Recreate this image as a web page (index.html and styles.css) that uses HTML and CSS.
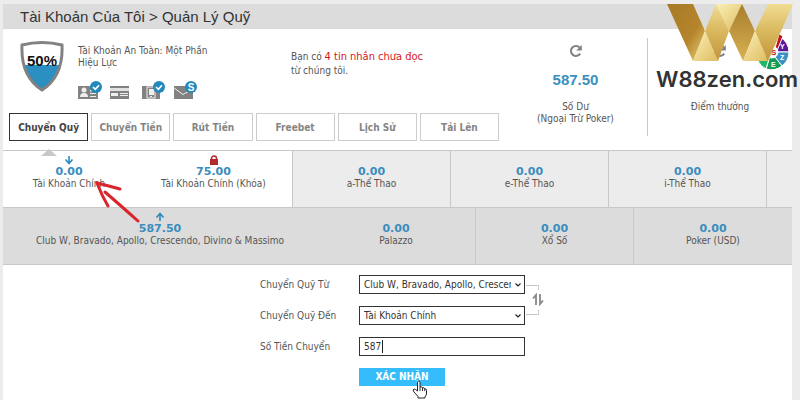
FILE: index.html
```html
<!DOCTYPE html>
<html lang="vi">
<head>
<meta charset="utf-8">
<meta name="viewport" content="width=device-width, initial-scale=1">
<title>Quản Lý Quỹ</title>
<link rel="stylesheet" href="styles.css">
</head>
<body>
<svg class="defs" aria-hidden="true">
  <symbol id="reload" viewBox="0 0 14 14">
    <path d="M11.2 9.6A5 5 0 1 1 10.7 3.6" fill="none" stroke="#828282" stroke-width="2"/>
    <path d="M12.8 1v5.6H7.2z" fill="#828282"/>
  </symbol>
  <symbol id="tick" viewBox="0 0 12 12">
    <circle cx="6" cy="6" r="6" fill="#2388bb"/>
    <path d="M3 6l2.300 2.300L9 4.200" fill="none" stroke="#fff" stroke-width="1.700"/>
  </symbol>
</svg>
<main class="page">
  <h1 class="title">Tài Khoản Của Tôi &gt; Quản Lý Quỹ</h1>

  <section class="summary">
    <div class="account">
      <svg class="shield" viewBox="0 0 44 51" role="img" aria-label="50%">
        <path d="M2 4Q22-1 42 4C43 25 36 40 22 49C8 40 1 25 2 4z" fill="#fff"/>
        <path d="M3 24H41C38 35 32 43 22 49C12 43 6 35 3 24z" fill="#2b8fc2"/>
        <path d="M2 4Q22-1 42 4C43 25 36 40 22 49C8 40 1 25 2 4z" fill="none" stroke="#828282" stroke-width="3"/>
        <text class="shield-text" x="22" y="25" text-anchor="middle">50%</text>
      </svg>
      <div class="security">
        <p class="security-text">Tài Khoản An Toàn: Một Phần<br>Hiệu Lực</p>
        <div class="badges">
          <svg class="badge" viewBox="0 0 26 18">
            <path d="M0 5h20v13H0z" fill="#828282"/>
            <circle cx="6" cy="9" r="2.500" fill="#eee"/>
            <path d="M2 16q0-4 4-4t4 4zM12 9h5v1.500h-5zM12 12h6v1h-6zM12 15h6v1h-6z" fill="#eee"/>
            <use href="#tick" x="12" y="0" width="12" height="12"/>
          </svg>
          <svg class="badge" viewBox="0 0 26 18">
            <path d="M0 5h19v13H0z" fill="#828282"/>
            <path d="M0 7h19v3H0z" fill="#e2e2e2"/>
            <path d="M1 12h7v3H1zM10 12h8v1h-8zM10 14h8v1h-8z" fill="#eee"/>
          </svg>
          <svg class="badge" viewBox="0 0 26 18">
            <path d="M0 5h18v13H0z" fill="#828282"/>
            <rect x="5" y="6" width="8" height="11" fill="#828282" stroke="#eee"/>
            <path d="M7 8h5v6H7z" fill="#eee"/><path d="M8 15h2v1H8z" fill="#eee"/>
            <use href="#tick" x="11" y="0" width="12" height="12"/>
          </svg>
          <svg class="badge" viewBox="0 0 26 18">
            <path d="M0 5h19v13H0z" fill="#828282"/>
            <path d="M0 7l9 6.500L19 8" fill="none" stroke="#eee"/>
            <circle cx="17" cy="6" r="6" fill="#2388bb"/>
            <text class="badge-text" x="17" y="10" text-anchor="middle">S</text>
          </svg>
        </div>
      </div>
    </div>
    <p class="message">Bạn có <a class="unread" href="#">4 tin nhắn chưa đọc</a><br>từ chúng tôi.</p>
    <div class="stat stat-balance">
      <button class="reload" type="button" aria-label="Số Dư"><svg><use href="#reload"/></svg></button>
      <strong class="stat-value">587.50</strong>
      <span>Số Dư<br>(Ngoại Trừ Poker)</span>
    </div>
    <div class="stat">
      <button class="reload" type="button" aria-label="Điểm thưởng"><svg><use href="#reload"/></svg></button>
      <strong class="stat-value"></strong>
      <span>Điểm thưởng</span>
    </div>
    <nav class="tabs">
      <a class="tab tab-active" href="#">Chuyển Quỹ</a>
      <a class="tab" href="#">Chuyển Tiền</a>
      <a class="tab" href="#">Rút Tiền</a>
      <a class="tab" href="#">Freebet</a>
      <a class="tab" href="#">Lịch Sử</a>
      <a class="tab" href="#">Tải Lên</a>
    </nav>
  </section>

  <section class="wallets">
    <div class="wallet-row wallet-main">
      <div class="wallet wallet-on">
        <svg class="mark" viewBox="0 0 10 10"><path d="M5 1v7M1.500 4.500L5 8.500l3.500-4" fill="none" stroke="#2e8abb" stroke-width="1.600"/></svg>
        <strong class="amount">0.00</strong><span>Tài Khoản Chính</span>
      </div>
      <div class="wallet wallet-on">
        <svg class="mark" viewBox="0 0 10 10"><path d="M2.500 5V3.500a2.500 2.500 0 0 1 5 0V5" fill="none" stroke="#b12a2e" stroke-width="1.500"/><path d="M1 4h8v6H1z" fill="#b12a2e"/></svg>
        <strong class="amount">75.00</strong><span>Tài Khoản Chính (Khóa)</span>
      </div>
      <div class="wallet line"><strong class="amount">0.00</strong><span>a-Thể Thao</span></div>
      <div class="wallet line"><strong class="amount">0.00</strong><span>e-Thể Thao</span></div>
      <div class="wallet line"><strong class="amount">0.00</strong><span>i-Thể Thao</span></div>
      <div class="line"></div>
      <i class="pointer"></i>
    </div>
    <div class="wallet-row wallet-more">
      <div class="wallet">
        <svg class="mark" viewBox="0 0 10 10"><path d="M5 9V2M1.500 5.500L5 1.500l3.500 4" fill="none" stroke="#2e8abb" stroke-width="1.600"/></svg>
        <strong class="amount">587.50</strong><span>Club W, Bravado, Apollo, Crescendo, Divino &amp; Massimo</span>
      </div>
      <div class="wallet"><strong class="amount">0.00</strong><span>Palazzo</span></div>
      <div class="wallet line"><strong class="amount">0.00</strong><span>Xổ Số</span></div>
      <div class="wallet line"><strong class="amount">0.00</strong><span>Poker (USD)</span></div>
    </div>
    <svg class="arrow" viewBox="0 0 50 46"><path d="M45 40Q27 24 12 11M27 8Q16 5 4 2Q9 15 15 25" fill="none" stroke="#d9252b" stroke-width="3" stroke-linecap="round" stroke-linejoin="round"/></svg>
  </section>

  <form class="transfer">
    <label for="from">Chuyển Quỹ Từ</label>
    <div class="field">
      <select class="control" id="from"><option>Club W, Bravado, Apollo, Crescendo, Divino &amp; Massimo</option></select>
      <svg class="chevron" viewBox="0 0 6 4"><path d="M.5.500L3 3 5.500.5" fill="none" stroke="#222" stroke-width="1.200"/></svg>
    </div>
    <label for="to">Chuyển Quỹ Đến</label>
    <div class="field">
      <select class="control" id="to"><option>Tài Khoản Chính</option></select>
      <svg class="chevron" viewBox="0 0 6 4"><path d="M.5.500L3 3 5.500.5" fill="none" stroke="#222" stroke-width="1.200"/></svg>
    </div>
    <svg class="swap" viewBox="0 0 20 32">
      <path d="M1 1.500H13.500V6M1 30.500H13.500V26" fill="none" stroke="#c8c8c8"/>
      <path d="M11 21V11L8 14.500M15 10V20L18 16.500" fill="none" stroke="#888" stroke-width="1.800"/>
    </svg>
    <label for="sum">Số Tiền Chuyển</label>
    <div class="field">
      <input class="control" id="sum" type="text" value="587">
      <i class="caret"></i>
    </div>
    <div class="action">
      <button class="confirm" type="button">XÁC NHẬN</button>
      <svg class="hand" viewBox="0 0 15 19"><path d="M5.500 11V2.500q0-1.500 1.200-1.500T8 2.500V7q2-.8 2.500.8 2-.5 2.200 1 1.800-.3 1.800 1.700v3.500q-.5 1.500-1.500 3V18H6v-1.500L2 12Q0 9.500 2 9q1.500 0 3.500 2z" fill="#fff" stroke="#222"/><path d="M8 7v4M10.500 8v3M12.700 9v2" stroke="#333" fill="none"/></svg>
    </div>
  </form>

  <aside class="brand">
    <svg class="brand-mark" viewBox="0 0 130 68">
      <defs>
        <linearGradient id="deep" x2="1" y2="1"><stop offset="0" stop-color="#a87925"/><stop offset=".6" stop-color="#b5852d"/><stop offset="1" stop-color="#ecd177"/></linearGradient>
        <linearGradient id="dark" x2="0" y2="1"><stop offset="0" stop-color="#a77d2c"/><stop offset="1" stop-color="#d8b252"/></linearGradient>
        <linearGradient id="gold" x2="0" y2="1"><stop offset="0" stop-color="#f1dd93"/><stop offset=".5" stop-color="#d8b65c"/><stop offset="1" stop-color="#c1953c"/></linearGradient>
        <linearGradient id="pale" x2="1" y2="1"><stop offset="0" stop-color="#faf0b8"/><stop offset="1" stop-color="#dfbd60"/></linearGradient>
      </defs>
      <g stroke="#fff" stroke-width="1">
        <path d="M104 48L113 33A18 18 0 0 1 122 48z" fill="#5a189d"/>
        <path d="M104 48H122A18 18 0 0 1 115 62z" fill="#3a91c4"/>
        <path d="M104 48L115 62A18 18 0 0 1 99 65z" fill="#159c55"/>
        <path d="M104 48L99 65A18 18 0 0 1 91 57z" fill="#20b866"/>
        <path d="M108 44L112 30L116 32L110 47z" fill="#c3141b"/>
        <circle cx="105" cy="48" r="6" fill="#fff"/>
      </g>
      <text class="wheel-s" x="104" y="51">S</text>
      <text class="wheel-letter" x="113" y="45">Y</text>
      <text class="wheel-letter" x="113" y="56">Z</text>
      <text class="wheel-letter" x="104" y="63">E</text>
      <path d="M0 0H26L38 27 26 57z" fill="url(#deep)"/>
      <path d="M38 27L51 57H26z" fill="url(#pale)"/>
      <path d="M49 0L62 27 51 57 38 27z" fill="url(#gold)"/>
      <path d="M49 0H75L62 27z" fill="url(#pale)"/>
      <path d="M75 0L88 27 76 57 62 27z" fill="url(#dark)"/>
      <path d="M88 27L101 57H76z" fill="url(#pale)"/>
      <path d="M101 0H126L101 57 88 27z" fill="url(#gold)"/>
    </svg>
    <span class="brand-name">W88zen.com</span>
  </aside>
</main>
</body>
</html>
```
FILE: styles.css
```css
* { box-sizing: border-box; }
body {
  margin: 0;
  background: #ececec;
  color: #555;
  font: 10px/12px "DejaVu Sans Condensed", "DejaVu Sans", sans-serif;
}
p, h1 { margin: 0; }
a { color: inherit; text-decoration: none; }
.defs { position: absolute; width: 0; height: 0; }
.page {
  position: relative;
  min-height: 100vh;
  border: solid #ececec;
  border-width: 4px 8px 0 3px;
  background: #fff;
}
.title {
  padding: 3px 17px 2px;
  background: #dcdcdc;
  color: #333;
  font: 15px/20px "Liberation Sans", Arial, sans-serif;
}
.summary {
  display: grid;
  grid-template-columns: 288fr 213fr 144fr 144fr;
  grid-template-rows: 84px 28px;
  padding-bottom: 9px;
}
.account { display: flex; gap: 14px; padding: 12px 0 0 17px; }
.shield { width: 44px; height: 51px; flex: none; }
.shield-text { font: bold 15px "Liberation Sans", sans-serif; fill: #111; }
.security-text { padding-top: 4px; white-space: nowrap; }
.badges { display: flex; gap: 6px; padding-top: 12px; }
.badge { width: 26px; height: 18px; }
.badge-text { font: bold 10px "Liberation Sans", sans-serif; fill: #fff; }
.message { padding-top: 21px; line-height: 14px; }
.unread { color: #d8161c; font-size: 11px; }
.stat {
  grid-row: 1 / 3;
  display: flex;
  flex-direction: column;
  align-items: center;
  margin: 9px 0 5px;
  padding-top: 6px;
  text-align: center;
}
.stat:nth-child(3) { grid-column: 3; }
.stat:nth-child(4) { grid-column: 4; }
.stat-balance { border-right: 1px solid #c8c8c8; }
.reload { border: 0; padding: 0; background: none; height: 14px; }
.reload svg { display: block; width: 14px; height: 14px; }
.stat-value {
  height: 20px;
  margin: 12px 0 11px;
  color: #3a8fbf;
  font: bold 15px/20px "Liberation Sans", sans-serif;
}
.tabs { grid-column: 1 / 3; grid-row: 2; display: flex; gap: 3px; padding: 0 5px 0 6px; }
.tab {
  flex: 1;
  border: 1px solid #ccc;
  color: #858585;
  font-weight: bold;
  line-height: 27px;
  text-align: center;
  white-space: nowrap;
}
.tab-active { border-color: #333; color: #444; }
.wallets { position: relative; }
.wallet-row {
  position: relative;
  display: grid;
  border-top: 1px solid #c8c8c8;
  height: 57px;
}
.wallet-main { grid-template-columns: 132fr 157fr 158fr 158fr 158fr 26fr; background: #ececec; }
.wallet-more {
  grid-template-columns: 314fr 158fr 158fr 159fr;
  height: 58px;
  border-bottom: 1px solid #c8c8c8;
  background: #dcdcdc;
}
.wallet {
  position: relative;
  padding-top: 14px;
  text-align: center;
  white-space: nowrap;
}
.wallet-on { background: #fff; }
.line { border-left: 1px solid #c8c8c8; }
.wallet span, .amount { display: block; }
.amount { color: #3a8dbd; font: bold 11px/13px "DejaVu Sans", sans-serif; }
.mark { position: absolute; top: 4px; left: 50%; width: 10px; height: 10px; margin-left: -5px; }
.pointer {
  position: absolute;
  left: 38px;
  top: -2px;
  border: solid transparent;
  border-width: 0 8px 7px;
  border-bottom-color: #c8c8c8;
}
.arrow { position: absolute; left: 90px; top: 31px; width: 50px; height: 46px; }
.transfer {
  display: grid;
  grid-template-columns: 99px 166px 20px;
  row-gap: 12px;
  align-items: center;
  padding: 10px 0 0 257px;
}
.transfer label { grid-column: 1; }
.field { grid-column: 2; position: relative; }
.control {
  display: block;
  width: 100%;
  height: 19px;
  padding: 0 13px 0 4px;
  border: 1px solid #333;
  border-radius: 0;
  outline: 0;
  background: #fff;
  color: #333;
  font: inherit;
  appearance: none;
}
.chevron { position: absolute; right: 4px; top: 8px; width: 6px; height: 4px; }
.caret { position: absolute; left: 23px; top: 3px; width: 1px; height: 13px; background: #222; }
.swap { grid-column: 3; grid-row: 1 / 3; width: 20px; height: 32px; }
.action { grid-column: 2; position: relative; }
.confirm {
  display: block;
  width: 86px;
  height: 18px;
  padding: 0;
  border: 0;
  background: #35bdfb;
  color: #fff;
  font: inherit;
  font-weight: bold;
}
.hand { position: absolute; left: 53px; top: 12px; width: 15px; height: 19px; }
.brand { position: absolute; right: -6px; top: 0; width: 142px; }
.brand-mark { display: block; width: 130px; height: 68px; margin-left: 11px; }
.brand-name {
  display: block;
  margin-top: -4px;
  color: #333;
  font: 600 22px/22px Inter, sans-serif;
  white-space: nowrap;
}
.wheel-s { font: bold 8px "Liberation Sans", sans-serif; fill: #c3141b; }
.wheel-letter { font: bold 7px "Liberation Sans", sans-serif; fill: #fff; }
```
